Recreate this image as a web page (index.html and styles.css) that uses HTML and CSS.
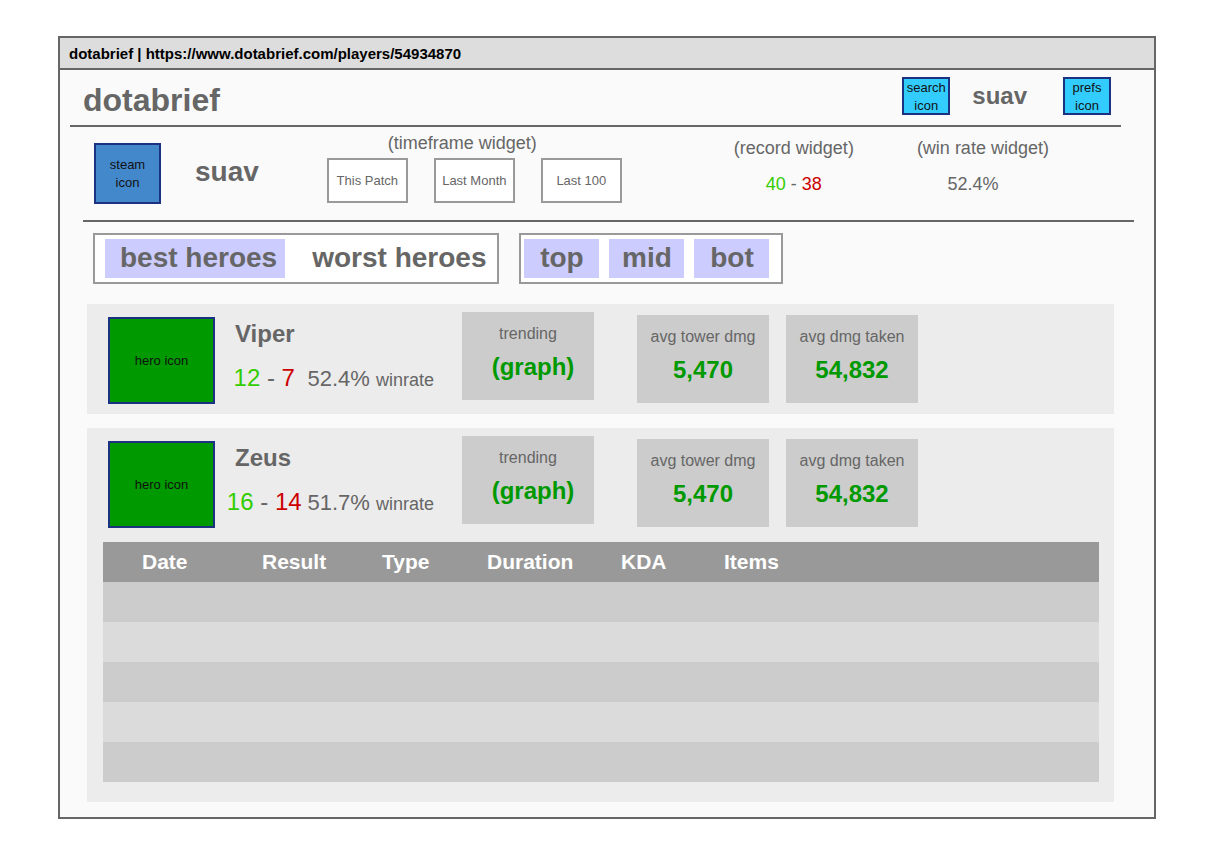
FILE: index.html
```html
<!DOCTYPE html>
<html lang="en">
<head>
<meta charset="utf-8">
<title>dotabrief</title>
<link rel="stylesheet" href="styles.css">
</head>
<body>
<div class="window">
  <div class="titlebar">dotabrief | https://www.dotabrief.com/players/54934870</div>

  <header class="site-header">
    <h1 class="brand">dotabrief</h1>
    <div class="actions">
      <button class="icon-button" type="button">search icon</button>
      <span class="account">suav</span>
      <button class="icon-button" type="button">prefs icon</button>
    </div>
  </header>

  <section class="profile">
    <div class="steam-icon">steam icon</div>
    <h2 class="player">suav</h2>
    <div class="timeframe">
      <div class="widget-label timeframe-label">(timeframe widget)</div>
      <div class="timeframe-options">
        <button class="option" type="button">This Patch</button>
        <button class="option" type="button">Last Month</button>
        <button class="option" type="button">Last 100</button>
      </div>
    </div>
    <div class="widget record">
      <div class="widget-label">(record widget)</div>
      <div class="widget-value"><span class="wins">40</span> - <span class="losses">38</span></div>
    </div>
    <div class="widget win-rate">
      <div class="widget-label">(win rate widget)</div>
      <div class="widget-value win-rate-value">52.4%</div>
    </div>
  </section>

  <main class="content">
    <nav class="filters">
      <div class="filter-box ranking">
        <button class="tab selected" type="button">best heroes</button>
        <button class="tab" type="button">worst heroes</button>
      </div>
      <div class="filter-box lanes">
        <button class="lane selected" type="button">top</button>
        <button class="lane selected" type="button">mid</button>
        <button class="lane selected" type="button">bot</button>
      </div>
    </nav>

    <article class="hero">
      <div class="hero-summary">
        <div class="hero-icon">hero icon</div>
        <div class="hero-info">
          <h3 class="hero-name">Viper</h3>
          <div class="hero-line">
            <span class="hero-record"><span class="wins">12</span> - <span class="losses">7</span></span>
            <span class="hero-rate">52.4% <small class="unit">winrate</small></span>
          </div>
        </div>
        <div class="stat trend">
          <div class="stat-label">trending</div>
          <div class="stat-value graph">(graph)</div>
        </div>
        <div class="averages">
          <div class="stat">
            <div class="stat-label">avg tower dmg</div>
            <div class="stat-value">5,470</div>
          </div>
          <div class="stat">
            <div class="stat-label">avg dmg taken</div>
            <div class="stat-value">54,832</div>
          </div>
        </div>
      </div>
    </article>

    <article class="hero expanded">
      <div class="hero-summary">
        <div class="hero-icon">hero icon</div>
        <div class="hero-info">
          <h3 class="hero-name">Zeus</h3>
          <div class="hero-line">
            <span class="hero-record"><span class="wins">16</span> - <span class="losses">14</span></span>
            <span class="hero-rate">51.7% <small class="unit">winrate</small></span>
          </div>
        </div>
        <div class="stat trend">
          <div class="stat-label">trending</div>
          <div class="stat-value graph">(graph)</div>
        </div>
        <div class="averages">
          <div class="stat">
            <div class="stat-label">avg tower dmg</div>
            <div class="stat-value">5,470</div>
          </div>
          <div class="stat">
            <div class="stat-label">avg dmg taken</div>
            <div class="stat-value">54,832</div>
          </div>
        </div>
      </div>
      <table class="matches">
        <colgroup>
          <col class="col-date"><col class="col-result"><col class="col-type"><col class="col-duration"><col class="col-kda"><col>
        </colgroup>
        <thead>
          <tr><th>Date</th><th>Result</th><th>Type</th><th>Duration</th><th>KDA</th><th>Items</th></tr>
        </thead>
        <tbody>
          <tr><td></td><td></td><td></td><td></td><td></td><td></td></tr>
          <tr><td></td><td></td><td></td><td></td><td></td><td></td></tr>
          <tr><td></td><td></td><td></td><td></td><td></td><td></td></tr>
          <tr><td></td><td></td><td></td><td></td><td></td><td></td></tr>
          <tr><td></td><td></td><td></td><td></td><td></td><td></td></tr>
        </tbody>
      </table>
    </article>
  </main>
</div>
</body>
</html>
```
FILE: styles.css
```css
* {
  box-sizing: border-box;
}

body {
  margin: 0;
  padding: 36px 71px 40px 58px;
  background: #fff;
  color: #666;
  font-family: "Liberation Sans", Arial, sans-serif;
}

h1, h2, h3 {
  margin: 0;
  font-weight: bold;
}

button {
  margin: 0;
  padding: 0;
  border: 0;
  background: none;
  color: inherit;
  font: inherit;
  cursor: pointer;
}

.window {
  border: 2px solid #666;
  background: #fafafa;
}

.titlebar {
  padding: 2px 9px 0;
  border-bottom: 2px solid #666;
  background: #ddd;
  color: #000;
  font-size: 15px;
  font-weight: bold;
  line-height: 28px;
}

.site-header {
  display: flex;
  justify-content: space-between;
  margin: 0 33px 0 10px;
  padding: 7px 10px 2px 13px;
  border-bottom: 2px solid #666;
}

.brand {
  font-size: 32px;
  line-height: 46px;
}

.actions {
  display: flex;
  align-items: center;
  align-self: flex-start;
}

.icon-button {
  width: 48px;
  height: 38px;
  border: 2px solid #1b3281;
  background: #3cf;
  color: #111;
  font-size: 13px;
  line-height: 18px;
}

.account {
  margin: 0 36px 0 22px;
  font-size: 24px;
  font-weight: bold;
  line-height: 38px;
}

.profile {
  display: flex;
  align-items: flex-start;
  margin: 0 20px 0 23px;
  padding: 0 11px 16px;
  border-bottom: 2px solid #666;
}

.steam-icon {
  display: flex;
  align-items: center;
  width: 67px;
  height: 61px;
  margin-top: 16px;
  padding: 0 12px;
  border: 2px solid #1b3281;
  background: #48c;
  color: #111;
  font-size: 13px;
  line-height: 18px;
  text-align: center;
}

.player {
  margin: 29px 68px 0 34px;
  font-size: 28px;
  line-height: 32px;
}

.widget-label,
.widget-value {
  font-size: 18px;
  line-height: 22px;
  text-align: center;
}

.timeframe {
  margin-top: 5px;
}

.timeframe-label {
  padding-right: 24px;
}

.timeframe-options {
  display: flex;
  gap: 26px;
  margin-top: 4px;
}

.option {
  width: 81px;
  height: 45px;
  border: 2px solid #999;
  background: #fff;
  font-size: 13px;
}

.widget {
  display: grid;
  gap: 14px;
  margin-top: 10px;
}

.record {
  margin-left: 112px;
}

.win-rate {
  margin-left: 63px;
}

.win-rate-value {
  padding-right: 20px;
}

.wins {
  color: #3c0;
}

.losses {
  color: #c00;
}

.content {
  display: grid;
  padding: 11px 40px 15px 27px;
}

.filters {
  display: flex;
  gap: 20px;
  margin: 0 0 20px 6px;
}

.filter-box {
  display: flex;
  border: 2px solid #999;
  background: #fff;
}

.ranking {
  gap: 12px;
  padding: 4px 3px 4px 10px;
}

.lanes {
  gap: 10px;
  padding: 4px 12px 4px 3px;
}

.tab,
.lane {
  height: 39px;
  padding-bottom: 2px;
  font-size: 28px;
  font-weight: bold;
}

.tab {
  padding-left: 15px;
  padding-right: 8px;
}

.lane {
  width: 75px;
}

.selected {
  background: #ccf;
}

.hero {
  padding: 0 15px 10px 16px;
  background: #ececec;
}

.expanded {
  margin-top: 14px;
  padding-bottom: 20px;
}

.hero-summary {
  display: flex;
  align-items: flex-start;
  padding-left: 5px;
}

.hero-icon {
  width: 107px;
  height: 87px;
  margin-top: 13px;
  border: 2px solid #1b3281;
  background: #090;
  color: #111;
  font-size: 13px;
  line-height: 83px;
  text-align: center;
}

.hero-info {
  width: 209px;
  margin: 14px 28px 0 10px;
}

.hero-name {
  padding-left: 10px;
  font-size: 24px;
  line-height: 32px;
}

.hero-line {
  display: flex;
  align-items: baseline;
  gap: 4px;
  margin-top: 12px;
  line-height: 32px;
  white-space: nowrap;
}

.hero-record {
  width: 82px;
  font-size: 24px;
  text-align: center;
}

.hero-rate {
  font-size: 22px;
}

.unit {
  font-size: 18px;
}

.stat {
  width: 132px;
  height: 88px;
  padding-top: 12px;
  background: #ccc;
  text-align: center;
}

.trend {
  margin-top: 8px;
}

.averages {
  display: flex;
  gap: 17px;
  margin: 11px 0 0 43px;
}

.stat-label {
  font-size: 16px;
  line-height: 20px;
}

.stat-value {
  margin-top: 9px;
  color: #090;
  font-size: 24px;
  font-weight: bold;
  line-height: 28px;
}

.graph {
  padding-left: 10px;
}

.matches {
  width: 100%;
  margin-top: 14px;
  border-collapse: collapse;
  table-layout: fixed;
}

.matches th {
  height: 40px;
  padding: 0 0 0 39px;
  background: #999;
  color: #fff;
  font-size: 21px;
  line-height: 24px;
  text-align: left;
}

.matches td {
  height: 40px;
  padding: 0;
  background: #ccc;
}

.matches tbody tr:nth-child(even) td {
  background: #dbdbdb;
}

.col-date,
.col-result {
  width: 120px;
}

.col-type {
  width: 105px;
}

.col-duration {
  width: 134px;
}

.col-kda {
  width: 103px;
}
```
